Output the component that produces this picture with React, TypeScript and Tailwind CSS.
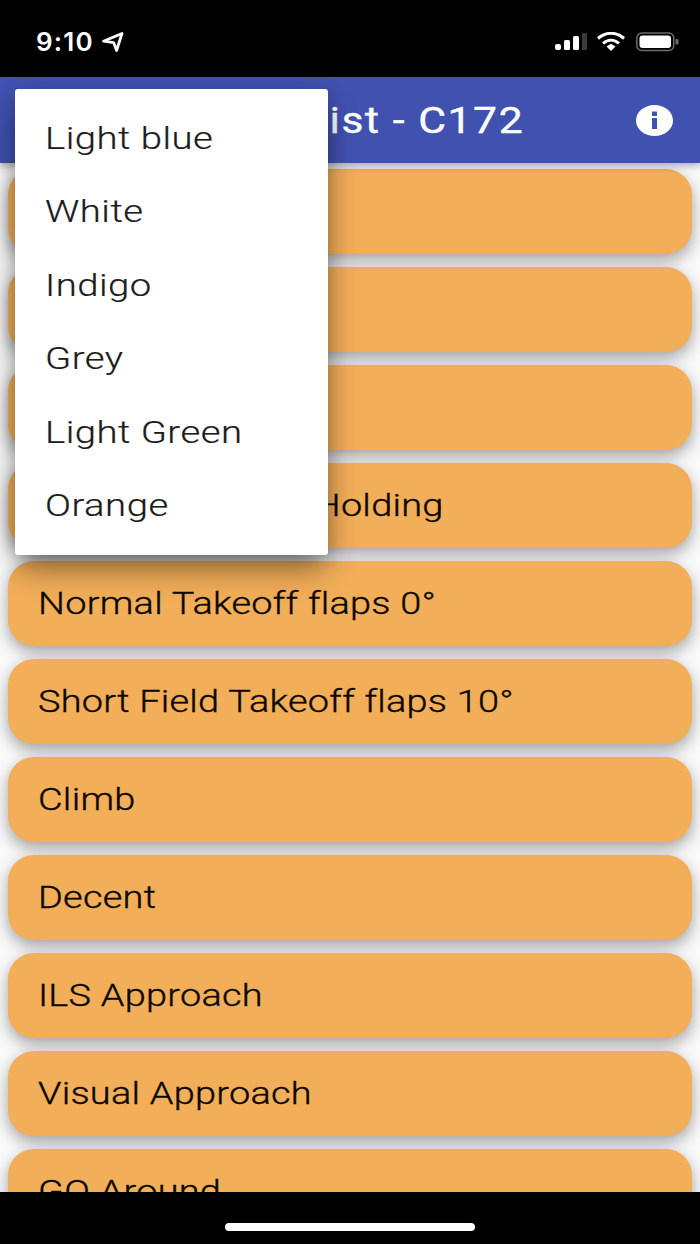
const sections = [
  "Preflight",
  "Before Start",
  "Start Engine",
  "Before Takeoff - Holding",
  "Normal Takeoff flaps 0°",
  "Short Field Takeoff flaps 10°",
  "Climb",
  "Decent",
  "ILS Approach",
  "Visual Approach",
  "GO Around",
];

const colours = ["Light blue", "White", "Indigo", "Grey", "Light Green", "Orange"];

function StatusBar() {
  return (
    <div className="relative flex h-[77px] shrink-0 items-center justify-between bg-black pt-[7px] pr-5 pl-9 text-white">
      <div className="flex items-center gap-[8px]">
        <span className="text-[26px] leading-none font-semibold tracking-[1.2px] [font-family:Inter,sans-serif]">
          9:10
        </span>
        <svg width="22" height="20" viewBox="0 0 22 20" fill="none">
          <path d="M1.5 9.2 20 1.5 14.6 18.5 11.6 10.6Z" stroke="white" strokeWidth="2.8" strokeLinejoin="round" />
        </svg>
      </div>
      <svg width="126" height="20" viewBox="0 0 126 20" fill="none">
        <rect x="1" y="12" width="6" height="6" rx="2" fill="white" />
        <rect x="10" y="8" width="6" height="10" rx="1.5" fill="white" />
        <rect x="19" y="4" width="6" height="14" rx="1.5" fill="white" />
        <rect x="28" y="1" width="5" height="17" rx="1" fill="#3a3a3a" />
        <path d="M44 6.5C52 -0.5 62 -0.5 70 6.5" stroke="white" strokeWidth="3" />
        <path d="M49 11.5C54 7 60 7 65 11.5" stroke="white" strokeWidth="3" />
        <path d="M52.5 14.5 57 11.8 61.5 14.5 57 19Z" fill="white" />
        <rect x="82.8" y="1" width="37" height="17.5" rx="5" stroke="#6b6b6b" strokeWidth="1.5" />
        <rect x="85.5" y="3.5" width="31.5" height="12.5" rx="3" fill="white" />
        <rect x="121.5" y="7" width="3" height="5.5" rx="1" fill="#6b6b6b" />
      </svg>
    </div>
  );
}

function AppBar() {
  return (
    <div className="relative z-10 flex h-[86px] shrink-0 items-center justify-between bg-[#4151b0] pr-[27px] pl-[192px] shadow-[0_3px_7px_rgba(0,0,0,0.3)]">
      <span className="origin-left scale-x-[1.15] text-[37px] leading-none font-normal tracking-[1.4px] whitespace-nowrap text-white [-webkit-text-stroke:0.4px_white] [font-family:Roboto,sans-serif]">
        Checklist - C172
      </span>
      <svg width="37" height="31" viewBox="0 0 37 31">
        <ellipse cx="18.5" cy="15.5" rx="18.5" ry="15.5" fill="white" />
        <rect x="16" y="13" width="5" height="11" fill="#4151b0" />
        <rect x="16" y="6.5" width="5" height="4.5" fill="#4151b0" />
      </svg>
    </div>
  );
}

export default function App() {
  return (
    <div className="relative flex h-[1244px] w-[700px] flex-col overflow-hidden bg-[#fafafa]">
      <StatusBar />
      <AppBar />
      <div className="flex min-h-0 flex-1 flex-col gap-[13px] overflow-hidden px-2 pt-[6px]">
        {sections.map((s) => (
          <div
            key={s}
            className="flex h-[85px] shrink-0 items-center rounded-[26px] bg-[#f2ae59] pl-[30px] shadow-[0_6px_16px_rgba(0,0,0,0.36)]"
          >
            <span className="origin-left scale-x-[1.223] text-[31px] leading-none font-light tracking-[0.2px] whitespace-nowrap text-[#0a0804] [-webkit-text-stroke:0.35px_#0a0804] [font-family:Roboto,sans-serif]">
              {s}
            </span>
          </div>
        ))}
      </div>
      <div className="flex h-[52px] shrink-0 items-end justify-center bg-black pb-[13px]">
        <div className="h-2 w-[250px] rounded-full bg-white" />
      </div>
      <div className="absolute top-[89px] left-[15px] z-20 flex w-[313px] flex-col rounded-[3px] bg-white py-[12.5px] shadow-[0_16px_30px_-4px_rgba(0,0,0,0.45),0_4px_20px_rgba(0,0,0,0.14)]">
        {colours.map((c) => (
          <div key={c} className="flex h-[73.5px] items-center pl-[30px]">
            <span className="origin-left scale-x-[1.235] text-[31px] leading-none font-light tracking-[0.4px] whitespace-nowrap text-[#1c1c1c] [-webkit-text-stroke:0.2px_#1c1c1c] [font-family:Roboto,sans-serif]">
              {c}
            </span>
          </div>
        ))}
      </div>
    </div>
  );
}
